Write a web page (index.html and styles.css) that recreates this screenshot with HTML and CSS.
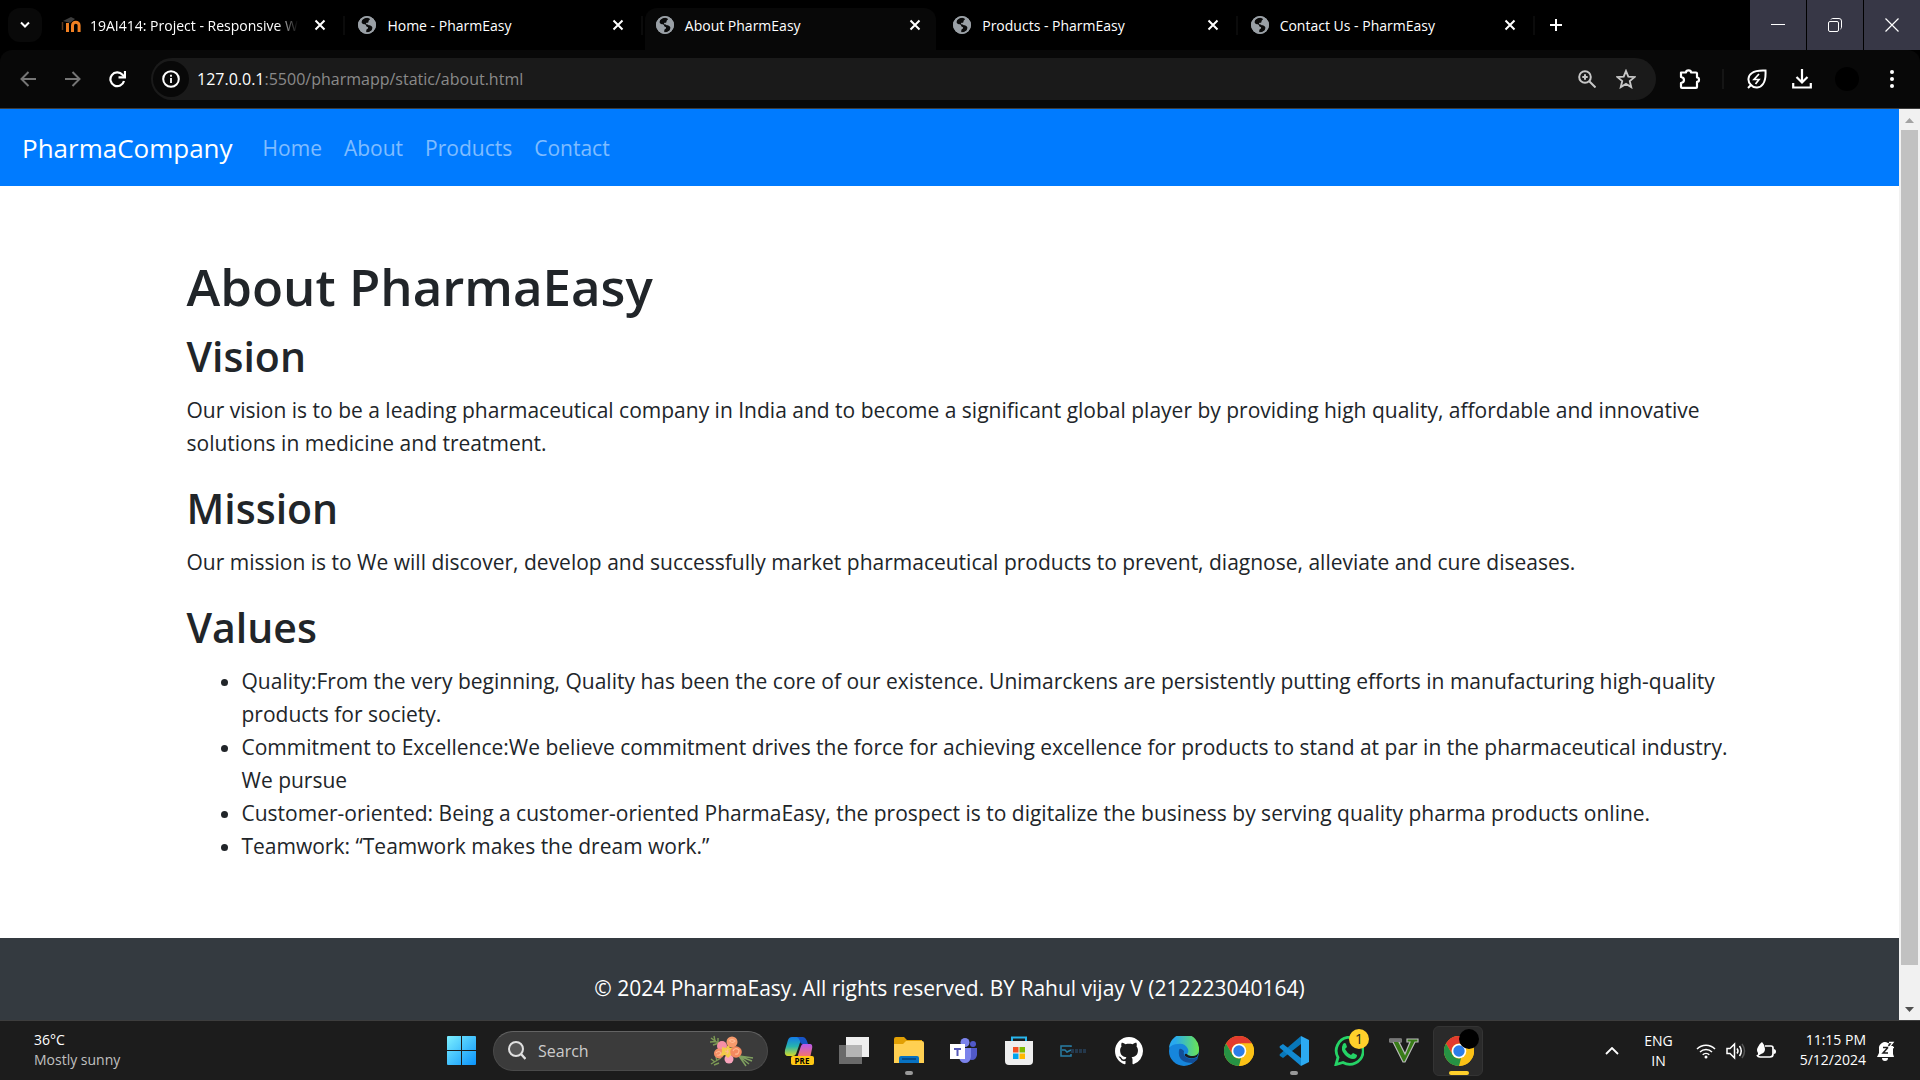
FILE: index.html
```html
<!DOCTYPE html>
<html lang="en">
<head>
<meta charset="utf-8">
<title>About PharmEasy</title>
<link rel="stylesheet" href="styles.css">
</head>
<body>
<svg class="defs" aria-hidden="true">
  <symbol id="globe" viewBox="0 0 18 18"><circle cx="9" cy="9" r="9" fill="#9aa0a6"/><path d="M9 1.800c-2 .2-3.600 1-4.800 2.300L3.600 6c.2 1.400 1 2 2.400 2.200 1.500 0 2 .6 2.200 1.800.3.800 1.200.7 1.800 1.300.4.900-.4 1.600-1.200 2-.7.600-.4 1.700-.6 2.900 2 .2 4.200-.6 5.600-2 .2-1.200.7-1.700.5-2.900-.8-1.400-2-2-3.600-2-.6-.8-1.400-1.200-2.600-1.100-.4-.7.2-1.400 1-1.400.9.100 1.400-.3 1.400-1.200 0-1.100.9-1.500 1.600-2.300C11.200 2.300 10.200 1.800 9 1.800z" fill="#0a0a0a"/><circle cx="9" cy="9" r="8.200" fill="none" stroke="#9aa0a6" stroke-width="1.600"/></symbol>
  <symbol id="cross" viewBox="0 0 12 12"><path d="M1.500 1.500l9 9M10.500 1.500l-9 9" stroke="#fff" stroke-width="2" fill="none"/></symbol>
  <symbol id="chrome" viewBox="0 0 30 30"><circle cx="15" cy="15" r="15" fill="#fbc116"/><path d="M2 7.500A15 15 0 0 1 28 7.500H15a7.500 7.500 0 0 0-6.500 11.200z" fill="#e33b2e"/><path d="M2 7.500l6.500 11.300A7.500 7.500 0 0 0 17 22.200L15 30A15 15 0 0 1 2 7.500z" fill="#269244"/><path d="M21.500 18.700L15 30A15 15 0 0 0 28 7.500H15a7.500 7.500 0 0 1 6.500 11.200z" fill="#fbc116"/><circle cx="15" cy="15" r="7.300" fill="#fff"/><circle cx="15" cy="15" r="5.700" fill="#2b7de9"/></symbol>
</svg>

<header class="browser">
  <div class="tab-strip">
    <button class="tab-search" aria-label="Search tabs"><svg width="10" height="8" viewBox="0 0 10 8"><path d="M1 1.500l4 4 4-4" stroke="#fff" stroke-width="2" fill="none"/></svg></button>
    <div class="tabs">
      <div class="tab"><svg class="favicon" viewBox="0 0 20 18"><path d="M6.500 16V7M11.500 16V9.500a3.300 3.300 0 0 1 6.600 0V16" fill="none" stroke="#f28022" stroke-width="3"/><path d="M2 5l8-4 4 2-5 4z" fill="#3d3d3d"/><path d="M1.500 6v8" stroke="#5a3a20" stroke-width="1.500"/></svg><span class="tab-title faded">19AI414: Project - Responsive W</span><button class="tab-close" aria-label="Close tab"><svg><use href="#cross"/></svg></button></div>
      <div class="tab"><svg class="favicon"><use href="#globe"/></svg><span class="tab-title">Home - PharmEasy</span><button class="tab-close" aria-label="Close tab"><svg><use href="#cross"/></svg></button></div>
      <div class="tab active"><svg class="favicon"><use href="#globe"/></svg><span class="tab-title">About PharmEasy</span><button class="tab-close" aria-label="Close tab"><svg><use href="#cross"/></svg></button></div>
      <div class="tab"><svg class="favicon"><use href="#globe"/></svg><span class="tab-title">Products - PharmEasy</span><button class="tab-close" aria-label="Close tab"><svg><use href="#cross"/></svg></button></div>
      <div class="tab"><svg class="favicon"><use href="#globe"/></svg><span class="tab-title">Contact Us - PharmEasy</span><button class="tab-close" aria-label="Close tab"><svg><use href="#cross"/></svg></button></div>
    </div>
    <button class="new-tab" aria-label="New tab"><svg width="14" height="14" viewBox="0 0 14 14"><path d="M7 1v12M1 7h12" stroke="#fff" stroke-width="2"/></svg></button>
    <div class="window-controls">
      <button aria-label="Minimize"><svg width="14" height="14" viewBox="0 0 14 14"><path d="M0 6.500h14" stroke="#fff"/></svg></button>
      <button aria-label="Restore"><svg width="14" height="14" viewBox="0 0 14 14" fill="none" stroke="#fff"><rect x=".5" y="3.500" width="10" height="10" rx="1.500"/><path d="M3 1.500a2 2 0 0 1 1.500-1H11A2.500 2.500 0 0 1 13.500 3v6.500a2 2 0 0 1-1 1.500"/></svg></button>
      <button aria-label="Close"><svg width="14" height="14" viewBox="0 0 14 14"><path d="M.5.5l13 13M13.500.5l-13 13" stroke="#fff" stroke-width="1.200"/></svg></button>
    </div>
  </div>

  <div class="toolbar">
    <div class="nav-buttons">
      <button aria-label="Back"><svg width="16" height="16" viewBox="0 0 16 16" fill="none" stroke="#757575" stroke-width="2"><path d="M16 8H2M8.500 1L1.500 8l7 7"/></svg></button>
      <button aria-label="Forward"><svg width="16" height="16" viewBox="0 0 16 16" fill="none" stroke="#757575" stroke-width="2"><path d="M0 8h14M7.500 1l7 7-7 7"/></svg></button>
      <button aria-label="Reload"><svg width="17" height="17" viewBox="0 0 17 17" fill="none" stroke="#fff" stroke-width="2.200"><path d="M15 10a6.900 6.900 0 1 1-1.500-6.300L16 6"/><path d="M16 0v6.300H9.500"/></svg></button>
    </div>
    <div class="omnibox">
      <button class="site-info" aria-label="Site information"><svg width="18" height="18" viewBox="0 0 18 18"><circle cx="9" cy="9" r="7.800" fill="none" stroke="#fff" stroke-width="2"/><path d="M9 8v5M9 4.800v2" stroke="#fff" stroke-width="1.800"/></svg></button>
      <a class="url" href="#"><span class="host">127.0.0.1</span>:5500/pharmapp/static/about.html</a>
      <button aria-label="Zoom"><svg width="18" height="18" viewBox="0 0 18 18" fill="none" stroke="#c7c7c7" stroke-width="2"><circle cx="7" cy="7" r="5.800"/><path d="M11 11l6.500 6.500M7 4.300v5.400M4.300 7h5.400"/></svg></button>
      <button aria-label="Bookmark"><svg width="20" height="20" viewBox="0 0 20 20"><path d="M10 2l2.300 5.600 6.200.5-4.700 4 1.400 6L10 14.900 4.800 18.100l1.400-6-4.700-4 6.200-.5z" fill="none" stroke="#c7c7c7" stroke-width="1.900"/></svg></button>
    </div>
    <div class="tools">
      <button aria-label="Extensions"><svg width="22" height="22" viewBox="0 0 22 22"><path d="M2 4.500h5Q7 2.300 9.500 2.300T12 4.500h5q1 0 1 1v4q2 0 2 2.200t-2 2.200v5q0 1-1 1H3q-1 0-1-1V15q3-.5 3-3T2 9z" fill="none" stroke="#fff" stroke-width="2.200" stroke-linejoin="round"/></svg></button>
      <span class="tool-divider"></span>
      <button aria-label="Energy Saver"><svg width="20" height="20" viewBox="0 0 20 20" fill="none" stroke="#fff" stroke-width="2"><path d="M1 19l3-3A7.500 7.500 0 0 1 5 4Q9 1 18.500 1.500 19 11 16 15A7.500 7.500 0 0 1 4 16"/><path d="M12 5l-5 5.500h5L8.500 15" stroke-width="1.700"/></svg></button>
      <button aria-label="Downloads"><svg width="20" height="22" viewBox="0 0 20 22" fill="none" stroke="#fff" stroke-width="2.200"><path d="M10 1v13M4.500 9l5.500 5.500L15.500 9M1.200 15v4.500h17.600V15"/></svg></button>
      <button aria-label="Profile"><span class="avatar"></span></button>
      <button aria-label="Menu"><svg width="6" height="18" viewBox="0 0 6 18" fill="#fff"><circle cx="3" cy="2" r="2"/><circle cx="3" cy="9" r="2"/><circle cx="3" cy="16" r="2"/></svg></button>
    </div>
  </div>
</header>

<div class="viewport">
  <div class="site">
    <nav class="navbar">
      <a class="brand" href="#">PharmaCompany</a>
      <a class="nav-link" href="#">Home</a>
      <a class="nav-link" href="#">About</a>
      <a class="nav-link" href="#">Products</a>
      <a class="nav-link" href="#">Contact</a>
    </nav>
    <main class="container">
      <h1>About PharmaEasy</h1>
      <h2>Vision</h2>
      <p>Our vision is to be a leading pharmaceutical company in India and to become a significant global player by providing high quality, affordable and innovative solutions in medicine and treatment.</p>
      <h2>Mission</h2>
      <p>Our mission is to We will discover, develop and successfully market pharmaceutical products to prevent, diagnose, alleviate and cure diseases.</p>
      <h2>Values</h2>
      <ul>
        <li>Quality:From the very beginning, Quality has been the core of our existence. Unimarckens are persistently putting efforts in manufacturing high-quality products for society.</li>
        <li>Commitment to Excellence:We believe commitment drives the force for achieving excellence for products to stand at par in the pharmaceutical industry. We pursue</li>
        <li>Customer-oriented: Being a customer-oriented PharmaEasy, the prospect is to digitalize the business by serving quality pharma products online.</li>
        <li>Teamwork: “Teamwork makes the dream work.”</li>
      </ul>
    </main>
    <footer class="site-footer"><p>© 2024 PharmaEasy. All rights reserved. BY Rahul vijay V (212223040164)</p></footer>
  </div>
  <div class="scrollbar">
    <svg width="9" height="5" viewBox="0 0 9 5"><path d="M0 5l4.500-5L9 5z" fill="#a3a3a3"/></svg>
    <div class="scroll-track"><div class="scroll-thumb"></div></div>
    <svg width="9" height="5" viewBox="0 0 9 5"><path d="M0 0l4.500 5L9 0z" fill="#505050"/></svg>
  </div>
</div>

<div class="taskbar">
  <button class="weather"><span>36°C</span><span class="muted">Mostly sunny</span></button>
  <div class="apps">
    <button class="app" aria-label="Start"><svg width="30" height="30" viewBox="0 0 30 30"><defs><linearGradient id="win" x1="0" y1="0" x2="1" y2="1"><stop offset="0" stop-color="#7df0ff"/><stop offset="1" stop-color="#0a93fb"/></linearGradient></defs><path d="M1 0h13v14H0V1q0-1 1-1zM15 0h13q1 0 1 1v13H15zM0 15h14v14H1q-1 0-1-1zM15 15h14v13q0 1-1 1H15z" fill="url(#win)"/></svg></button>
    <label class="search">
      <svg width="18" height="19" viewBox="0 0 18 19" fill="none" stroke="#e0e0e0" stroke-width="2"><circle cx="8" cy="8" r="7" fill="#565656"/><path d="M13 13l4.500 5" stroke-width="2.400"/></svg>
      <input type="text" placeholder="Search" aria-label="Search">
      <svg width="44" height="32" viewBox="0 0 44 32"><path d="M1 3l11 8M0 7l6-.5M3 10l6-2M4 1l1 5M8 3v5M1 29l10-6M1 24l4 3M6 22l1 4M4 30l5-2" stroke="#7d9a55" stroke-width="1.400"/><path d="M29 21l14 2M29 21l13 5M29 21l10 8M29 21l7 10" stroke="#7fa05f" stroke-width="1.500"/><circle cx="12" cy="11" r="5" fill="#f58fa5"/><circle cx="22" cy="7" r="5.500" fill="#f79a6c"/><circle cx="9" cy="18.500" r="5" fill="#f58f66"/><circle cx="19" cy="24" r="4.500" fill="#f9a3ba"/><path d="M12 12l4 1 2-3 2 3 5-1-1 5 1 4-4-1-3 3-3-3-5 1 2-4z" fill="#f2cb48"/><circle cx="26" cy="17" r="5.800" fill="#f4895f"/><path d="M19 6q3-3 6 0-3 3-5 0M23 16q2-4 6-1 0 5-4 4M6 18q3-3 5 0-1 3-4 2M15 16l4 1M18 14l-1 5" fill="none" stroke="#ffb890" stroke-width="1.200"/></svg>
    </label>
    <button class="app" aria-label="Copilot"><svg width="30" height="30" viewBox="0 0 30 30"><defs><linearGradient id="cpa" x1="0" y1="0" x2="0" y2="1"><stop stop-color="#137be8"/><stop offset=".5" stop-color="#27b4ad"/><stop offset="1" stop-color="#d8dc27"/></linearGradient><linearGradient id="cpb" x1="0" y1="0" x2="0" y2="1"><stop stop-color="#b658ef"/><stop offset="1" stop-color="#ff7757"/></linearGradient></defs><path d="M8 1h10l-6 17q-1 2-3 2H4q-4 0-3-6L4 4q1-3 4-3z" fill="url(#cpa)"/><path d="M13 1h6q3 0 5 7h-5q-3 0-3-3-1-3-3-4z" fill="#1754c7"/><path d="M19 8h7q3 0 2 5l-2 9H13l4-12q1-2 2-2z" fill="url(#cpb)"/><rect x="7" y="20" width="23" height="9" rx="2" fill="#ffc814"/><text x="18" y="28" text-anchor="middle" font-size="8" font-weight="700" font-family="Open Sans, sans-serif">PRE</text></svg></button>
    <button class="app" aria-label="Task view"><svg width="30" height="30" viewBox="0 0 30 30"><path d="M7 1h23v20H7z" fill="#efefef"/><path d="M0 9h23v19H0z" fill="#6a6a6a"/><path d="M7 9h16v12H7z" fill="#b5b5b5"/></svg></button>
    <button class="app running" aria-label="File Explorer"><svg width="30" height="30" viewBox="0 0 30 30"><path d="M0 3q0-2 2-2h8l3 3h15v6H0z" fill="#e2a004"/><path d="M0 8h9l3-3h16q2 0 2 2v20H0z" fill="#ffd052"/><path d="M5 27v-5q0-2 2-2h16q2 0 2 2v5z" fill="#0872c2"/><path d="M8 23h14" stroke="#064d8a" stroke-width="2"/></svg></button>
    <button class="app" aria-label="Teams"><svg width="28" height="26" viewBox="0 0 28 26"><circle cx="15" cy="4.500" r="4.500" fill="#7b83eb"/><circle cx="23" cy="6" r="3" fill="#5059c9"/><path d="M18 10h9v7q-1 5-5 5-4 0-4-5z" fill="#5059c9"/><path d="M9 10h12v9q-1 6-6 6t-6-6z" fill="#7b83eb"/><rect y="6" width="15" height="15" fill="#fff"/><path d="M4 10h7v2H8.500v6h-2v-6H4z" fill="#5559b8"/></svg></button>
    <button class="app" aria-label="Microsoft Store"><svg width="30" height="30" viewBox="0 0 30 30"><path d="M8 6V1.500h14V6" fill="none" stroke="#28b5ec" stroke-width="2"/><path d="M1 5h28v20q0 4-4 4H5q-4 0-4-4z" fill="#eee"/><path d="M9 11h5.500v5.500H9z" fill="#f25022"/><path d="M15.500 11H21v5.500h-5.500z" fill="#7fba00"/><path d="M9 17.500h5.500V23H9z" fill="#00a4ef"/><path d="M15.500 17.500H21V23h-5.500z" fill="#ffb900"/></svg></button>
    <button class="app" aria-label="Code editor"><svg width="28" height="12" viewBox="0 0 28 12"><path d="M11 2V1H1v10h10V9M2 5h3l2 2 4-2" fill="none" stroke="#287da4" stroke-width="1.500"/><path d="M11 6h16" stroke="#24384c" stroke-width="4" stroke-dasharray="3 1"/></svg></button>
    <button class="app" aria-label="GitHub"><svg width="28" height="28" viewBox="0 0 16 16"><path fill="#fff" d="M8 0C3.580 0 0 3.580 0 8c0 3.540 2.290 6.530 5.470 7.590.4.070.55-.17.55-.38 0-.19-.01-.82-.01-1.490-2.010.37-2.530-.49-2.690-.94-.09-.23-.48-.94-.82-1.130-.28-.15-.68-.52-.01-.53.63-.01 1.080.58 1.230.82.72 1.210 1.870.87 2.330.66.070-.52.28-.87.510-1.070-1.780-.2-3.640-.89-3.640-3.950 0-.87.310-1.590.82-2.150-.08-.2-.36-1.020.08-2.120 0 0 .67-.21 2.200.82.64-.18 1.320-.27 2-.27s1.360.09 2 .27c1.530-1.040 2.200-.82 2.200-.82.44 1.100.16 1.920.08 2.120.51.56.82 1.270.82 2.150 0 3.070-1.870 3.750-3.650 3.950.29.25.54.73.54 1.480 0 1.070-.01 1.930-.01 2.200 0 .21.15.46.55.38A8.010 8.010 0 0 0 16 8c0-4.420-3.580-8-8-8z"/></svg></button>
    <button class="app" aria-label="Edge"><svg width="30" height="30" viewBox="0 0 30 30"><defs><linearGradient id="edge" x1="0" x2="1"><stop offset=".2" stop-color="#28a9ef"/><stop offset="1" stop-color="#6be553"/></linearGradient></defs><circle cx="15" cy="15" r="15" fill="#1686dc"/><path d="M0 12A15 15 0 0 1 30 14q0 6-6 6-5 0-6-2 2-2 1-5-3-6-10-5Q3 8 0 12z" fill="url(#edge)"/><path d="M10 14q-2 13 14 13l4-3q2-3-1-2-7 2-10-1-3-2-2-6-4-4-5-1z" fill="#124f99"/><path d="M18 18q-3-1-2 2 5 4 12 1l2-5q-2 4-6 4-5 0-6-2z" fill="#1c1c1c"/></svg></button>
    <button class="app" aria-label="Chrome"><svg width="30" height="30"><use href="#chrome"/></svg></button>
    <button class="app running" aria-label="Visual Studio Code"><svg width="30" height="30" viewBox="0 0 30 30"><path d="M22 0v8L4 22l-3-2q-1-1 0-2z" fill="#0877b9"/><path d="M22 30v-8L4 8l-3 2q-1 1 0 2z" fill="#1289d1"/><path d="M22 0l8 4v22l-8 4z" fill="#2caaf2"/></svg></button>
    <button class="app" aria-label="WhatsApp"><svg width="30" height="30" viewBox="0 0 30 30"><path d="M2 28.500l2-7A13.500 13.500 0 1 1 9 26.500z" fill="none" stroke="#25d366" stroke-width="2.800"/><path d="M9 8q2-2 3 0l1 3-2 2q2 4 6 6l2-2 4 2q0 4-4 4-4 0-8-4-5-5-2-11z" fill="#25d366"/></svg><span class="badge">1</span></button>
    <button class="app" aria-label="Vim"><svg width="30" height="26" viewBox="0 0 30 26"><path d="M1 1h11v3h-2l6 12 5-12h-3V1h11v3h-3L16 24h-2L4 4H1z" fill="#397c18" stroke="#bbb" stroke-width="1.200"/><path d="M1 1h11v3H1z" fill="#777"/></svg></button>
    <button class="app current" aria-label="Chrome, active window"><svg width="30" height="30"><use href="#chrome"/></svg><span class="profile-dot"></span></button>
  </div>
  <div class="tray">
    <button class="tray-more" aria-label="Show hidden icons"><svg width="14" height="8" viewBox="0 0 14 8"><path d="M1 7l6-6 6 6" stroke="#fff" stroke-width="1.800" fill="none"/></svg></button>
    <button class="language"><span>ENG</span><span>IN</span></button>
    <button class="status" aria-label="Network, volume and battery">
      <svg width="20" height="16" viewBox="0 0 20 16" fill="none" stroke="#fff" stroke-width="1.500"><path d="M1 6a12.500 12.500 0 0 1 18 0M4 9a8.500 8.500 0 0 1 12 0M6.700 11.800a4.700 4.700 0 0 1 6.600 0"/><circle cx="10" cy="14" r="1.500" fill="#fff" stroke="none"/></svg>
      <svg width="20" height="18" viewBox="0 0 20 18" fill="none" stroke="#fff" stroke-width="1.500"><path d="M1 6.500h3L8.500 2v14L4 11.500H1zM11 6.500q2 2.500 0 5M13.500 4q3.500 5 0 10"/><path d="M16 2q5 7 0 14" stroke="#555"/></svg>
      <svg width="20" height="18" viewBox="0 0 20 18"><path d="M9 4h6q2 0 2 2v6q0 3-3 3H4q-2 0-3-2" fill="none" stroke="#fff" stroke-width="1.700"/><path d="M17.500 7q2.500 0 2.500 2.500T17.500 12z" fill="#fff"/><path d="M6 0q3 3 3 7 0 4-4 5l-3 2 0-3q-2-3 0-6 1-3 4-5z" fill="#fff"/></svg>
    </button>
    <button class="clock"><span>11:15 PM</span><span>5/12/2024</span></button>
    <button class="bell" aria-label="Notifications"><svg width="18" height="20" viewBox="0 0 18 20"><path d="M2 8a6 6 0 0 1 9-6h1l-1 3h5v8l1 3H0l2-4zM5 17h6a3 3 0 0 1-6 0z" fill="#fff"/><path d="M6 6.500h5l-5 5.500h5" fill="none" stroke="#1c1c1c" stroke-width="1.500"/><path d="M12 1.500h4l-4 5h5" fill="none" stroke="#fff" stroke-width="1.300"/></svg></button>
  </div>
</div>
</body>
</html>
```
FILE: styles.css
```css
* { box-sizing: border-box; }

body {
  margin: 0;
  height: 100vh;
  display: flex;
  flex-direction: column;
  overflow: hidden;
  background: #000;
  font-family: "Open Sans", "Noto Sans", sans-serif;
}

button {
  padding: 0;
  border: 0;
  background: none;
  color: inherit;
  font: inherit;
  display: flex;
  align-items: center;
  justify-content: center;
}

a { color: inherit; text-decoration: none; }
svg { display: block; flex: none; }
.defs { position: absolute; width: 0; height: 0; }

/* Browser chrome */
.browser { flex: none; color: #fff; border-bottom: 1px solid #3c3c3c; }
.tab-strip { display: flex; height: 50px; }
.tab-search { flex: none; width: 34px; height: 34px; margin: 8px 8px 0; border-radius: 12px; background: #090909; }
.tabs { display: flex; flex: 0 1 1487px; min-width: 0; }
.tab {
  position: relative;
  flex: 1;
  min-width: 0;
  display: flex;
  align-items: center;
  padding: 0 21px 0 11px;
  font-size: 14px;
}
.tab:not(.active)::after {
  content: "";
  position: absolute;
  right: 2px;
  top: 16px;
  height: 19px;
  width: 2px;
  background: #0b0b0b;
}
.tab.active::before {
  content: "";
  position: absolute;
  z-index: -1;
  inset: 8px 6px 0 0;
  border-radius: 12px 12px 0 0;
  background: #080808;
}
.favicon { width: 18px; height: 18px; margin-right: 11px; }
.tab:first-child .favicon { width: 20px; margin-right: 9px; }
.tab-title { flex: 1; min-width: 0; white-space: nowrap; }
.faded { flex: none; margin-right: auto; mask-image: linear-gradient(90deg, #000 90%, transparent); }
.tab-close { width: 12px; height: 12px; }
.tab-close svg { width: 12px; height: 12px; }
.new-tab { flex: none; width: 38px; }
.window-controls { margin-left: auto; display: flex; gap: 1px; }
.window-controls button { width: 56px; background: #373746; }

.toolbar { display: flex; align-items: center; height: 58px; background: #080808; border-radius: 12px 12px 0 0; }
.nav-buttons { display: flex; padding: 0 11px 0 5px; }
.nav-buttons button { width: 45px; height: 42px; }
.omnibox { flex: 1; display: flex; align-items: center; gap: 20px; height: 42px; padding: 0 20px 0 2px; border-radius: 21px; background: #1a1a1a; }
.site-info { width: 36px; height: 36px; border-radius: 50%; background: #080808; }
.url { flex: 1; margin-left: -12px; color: #8a8a8a; font-size: 16px; }
.host { color: #fff; }
.tools { display: flex; align-items: center; padding: 0 6px 0 11px; }
.tools button { width: 45px; height: 42px; }
.tool-divider { width: 2px; height: 20px; margin: 0 10px; background: #151515; }
.avatar { width: 24px; height: 24px; border-radius: 50%; background: #000; }

/* Web page */
.viewport { flex: 1; min-height: 0; display: flex; background: #fff; }
.site { flex: 1; overflow: hidden; color: #212529; font-size: 21px; line-height: 33px; }
.navbar { display: flex; align-items: center; gap: 22px; height: 77px; padding: 2px 22px 0; background: #007bff; }
.brand { margin-right: 8px; color: #fff; font-size: 26px; }
.nav-link { color: rgba(255, 255, 255, .5); }
.container { max-width: 1568px; margin: 0 auto; padding: 67px 21px 53px; }
h1, h2 { margin: 0 0 11px; font-weight: 600; }
h1 { font-size: 51px; line-height: 66px; }
h2 { font-size: 41px; line-height: 53px; }
p, ul { margin: 0 0 22px; }
ul { margin-right: -22px; padding-left: 55px; }
.site-footer { padding: 34px 22px; background: #343a40; color: #fff; text-align: center; }

.scrollbar { flex: none; width: 21px; display: flex; flex-direction: column; align-items: center; padding: 9px 0 8px; gap: 7px; background: #f1f1f1; }
.scroll-track { flex: 1; width: 17px; }
.scroll-thumb { height: 96%; background: #c1c1c1; }

/* Taskbar */
.taskbar {
  flex: none;
  display: grid;
  grid-template-columns: 1fr auto 1fr;
  height: 60px;
  border-top: 1px solid #3d3d3d;
  background: #1c1c1c;
  color: #fff;
  font-size: 14px;
  line-height: 20px;
}
.weather { justify-self: start; margin-left: 34px; flex-direction: column; align-items: flex-start; padding-bottom: 2px; }
.muted { color: #c0c0c0; }
.apps { display: flex; align-items: center; }
.app { position: relative; width: 55px; height: 58px; }
.running::after, .current::after {
  content: "";
  position: absolute;
  bottom: 5px;
  width: 8px;
  height: 4px;
  border-radius: 2px;
  background: #999;
}
.current::after { width: 20px; background: #ffd02b; }
.current::before {
  content: "";
  position: absolute;
  z-index: 0;
  inset: 4px 3px 4px 2px;
  border: 1px solid #343434;
  border-radius: 6px;
  background: #2a2a2a;
}
.current svg { position: relative; }
.badge, .profile-dot { position: absolute; top: 7px; right: 7px; width: 20px; height: 20px; border-radius: 50%; background: #ffd02b; color: #222; line-height: 20px; }
.profile-dot { background: #000; }
.search { display: flex; align-items: center; width: 275px; height: 40px; margin: 0 3px 0 4px; padding: 0 13px 0 14px; border: 1px solid #4a4a4a; border-top-color: #636363; border-radius: 20px; background: #3b3b3b; }
.search input { flex: 1; min-width: 0; margin-left: 12px; padding: 0; border: 0; outline: 0; background: none; color: #ccc; font: inherit; font-size: 16px; }
.search input::placeholder { color: #ccc; opacity: 1; }
.tray { display: flex; justify-content: flex-end; padding-right: 25px; }
.tray-more { width: 30px; margin-right: 14px; }
.language { width: 35px; }
.language, .clock { flex-direction: column; }
.status { gap: 10px; margin: 0 20px 0 20px; }
.clock { align-items: flex-end; width: 70px; margin-right: 11px; padding-bottom: 1px; }
```
